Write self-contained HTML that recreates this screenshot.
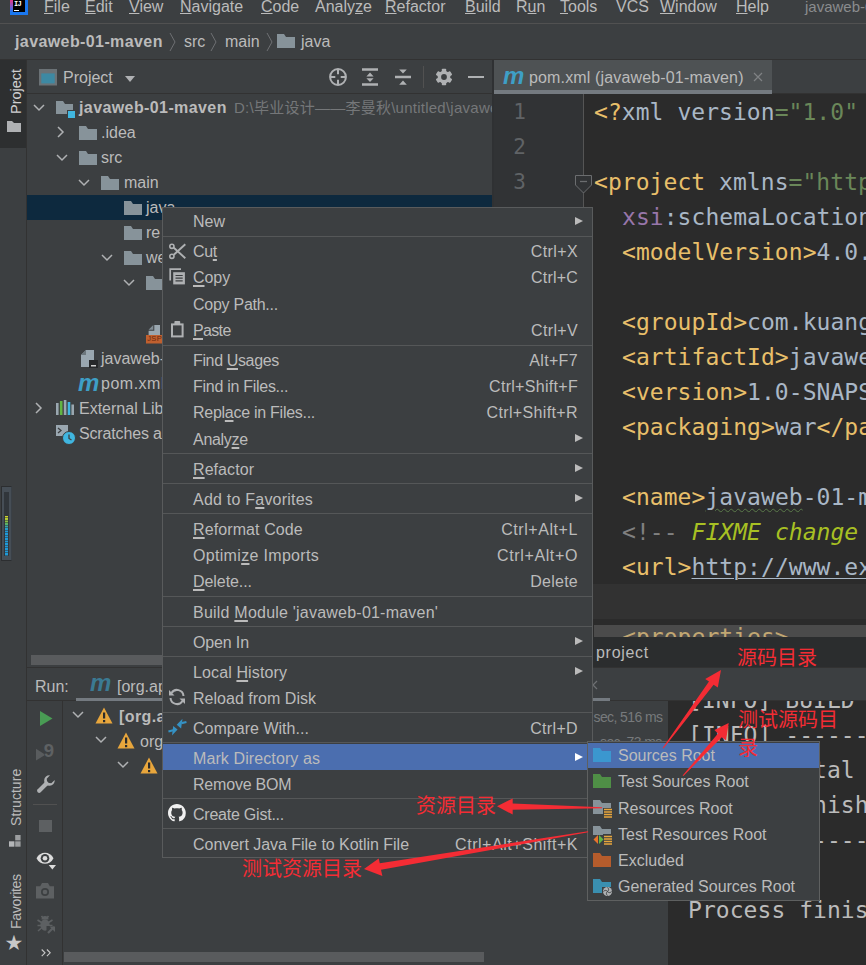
<!DOCTYPE html>
<html><head><meta charset="utf-8"><title>javaweb-01-maven</title>
<style>
*{box-sizing:border-box}
html,body{margin:0;padding:0}
body{width:866px;height:965px;overflow:hidden;position:relative;background:#3c3f41;color:#bbbbbb;font-family:"Liberation Sans","Noto Sans CJK SC",sans-serif;font-size:16px;}
.a{position:absolute}
.t{position:absolute;white-space:nowrap;line-height:20px;height:20px}
.b{font-weight:bold;letter-spacing:.4px}
u{text-decoration:underline;text-underline-offset:1.500px;text-decoration-thickness:1.500px}
.code{position:absolute;white-space:pre;font-family:"DejaVu Sans Mono","Liberation Mono",monospace;font-size:23px;line-height:35px;height:35px;color:#a9b7c6;letter-spacing:.05px}
.tag{color:#e8bf6a}.str{color:#6a8759}.ns{color:#9876aa}.at{color:#bababa}.cm{color:#808080}.fx{color:#a8c023;font-style:italic}
.ln{position:absolute;left:494px;width:32px;text-align:right;font-family:"DejaVu Sans Mono","Liberation Mono",monospace;font-size:21px;line-height:35px;color:#606366}
.mi{position:absolute;left:193px;white-space:nowrap;line-height:20px;height:20px;color:#bbbbbb}
.sc{position:absolute;right:288px;white-space:nowrap;line-height:20px;height:20px;color:#bbbbbb;letter-spacing:.5px;text-align:right}
.sep{position:absolute;left:163px;width:429px;height:1px;background:#555758}
.arr{position:absolute;left:575px;width:0;height:0;border-left:8px solid #bbbbbb;border-top:4.5px solid transparent;border-bottom:4.5px solid transparent}
.red{position:absolute;white-space:nowrap;color:#f42c34;font-family:"Noto Sans CJK SC","Liberation Sans",sans-serif;font-size:20px;line-height:26px}
svg{position:absolute;overflow:visible}
.mb u{text-underline-offset:.600px;text-decoration-thickness:1.200px}
</style></head><body>

<!-- ===== menu bar ===== -->
<div class="a" id="menubar" style="left:0;top:0;width:866px;height:24px;background:#3c3f41;border-bottom:1px solid #515151"></div>
<div class="a" style="left:10px;top:-3px;width:18px;height:18px;background:#1a78f0"></div>
<div class="a" style="left:10px;top:-3px;width:3px;height:15px;background:linear-gradient(180deg,#e23a86 0%,#d83a8e 25%,#8a55c8 60%,#1a78f0 100%)"></div>
<div class="a" style="left:12.800px;top:-3px;width:12.200px;height:14.800px;background:#000"></div>
<div class="a" style="left:14px;top:9.900px;width:5px;height:1.100px;background:#fff"></div>
<div class="t" style="left:14px;top:-0.500px;font-size:7px;font-weight:bold;color:#fff;line-height:9px;height:9px;font-family:'Liberation Mono',monospace;letter-spacing:-.6px">IJ</div>
<div class="t mb" style="left:44px;top:-3px"><u>F</u>ile</div>
<div class="t mb" style="left:85px;top:-3px"><u>E</u>dit</div>
<div class="t mb" style="left:129px;top:-3px"><u>V</u>iew</div>
<div class="t mb" style="left:180px;top:-3px"><u>N</u>avigate</div>
<div class="t mb" style="left:261px;top:-3px"><u>C</u>ode</div>
<div class="t mb" style="left:315px;top:-3px">Analy<u>z</u>e</div>
<div class="t mb" style="left:385px;top:-3px"><u>R</u>efactor</div>
<div class="t mb" style="left:465px;top:-3px"><u>B</u>uild</div>
<div class="t mb" style="left:516px;top:-3px">R<u>u</u>n</div>
<div class="t mb" style="left:560px;top:-3px"><u>T</u>ools</div>
<div class="t mb" style="left:616px;top:-3px">VCS</div>
<div class="t mb" style="left:660px;top:-3px"><u>W</u>indow</div>
<div class="t mb" style="left:736px;top:-3px"><u>H</u>elp</div>
<div class="t mb" style="left:805px;top:-3px;color:#8a8c8e;font-size:15px">javaweb-01-maven</div>

<!-- ===== navigation bar ===== -->
<div class="a" id="navbar" style="left:0;top:24px;width:866px;height:36px;background:#3c3f41;border-bottom:1px solid #323232"></div>
<div class="t b" style="left:15px;top:32px">javaweb-01-maven</div>
<div class="t" style="left:184px;top:32px">src</div>
<div class="t" style="left:225px;top:32px">main</div>
<div class="t" style="left:301px;top:32px">java</div>
<svg class="chev" style="left:169px;top:32px" width="8" height="20"><path d="M1 1 L6 10 L1 19" fill="none" stroke="#6e7073" stroke-width="1"/></svg>
<svg class="chev" style="left:210px;top:32px" width="8" height="20"><path d="M1 1 L6 10 L1 19" fill="none" stroke="#6e7073" stroke-width="1"/></svg>
<svg class="chev" style="left:266px;top:32px" width="8" height="20"><path d="M1 1 L6 10 L1 19" fill="none" stroke="#6e7073" stroke-width="1"/></svg>
<svg style="left:277px;top:34px" width="18" height="14"><path d="M0 0 H7 L9 3 H18 V14 H0 Z" fill="#87939a"/></svg>

<!-- ===== left tool stripe ===== -->
<div class="a" id="lstripe" style="left:0;top:60px;width:27px;height:905px;background:#3c3f41;border-right:1px solid #323232"></div>
<div class="a" style="left:0;top:60px;width:26px;height:88px;background:#2d2f30"></div>
<div class="t" style="left:6.500px;top:114px;transform-origin:0 0;transform:rotate(-90deg);font-size:14.500px;color:#d0d0d0;line-height:18px;height:18px">Project</div>
<svg style="left:7px;top:121px" width="14" height="11"><path d="M0 0 H5 L7 2 H14 V11 H0 Z" fill="#afb1b3"/></svg>


<!-- ===== project panel header ===== -->
<div class="a" id="projhead" style="left:27px;top:60px;width:465px;height:34px;background:#3c3f41;border-bottom:1px solid #323232"></div>
<svg style="left:39px;top:69px" width="18" height="17"><rect x="0" y="0" width="18" height="16.500" fill="#6b7276"/><rect x="2.300" y="4.400" width="13.400" height="10" fill="#3d89a3"/></svg>
<div class="t" style="left:63px;top:68px">Project</div>
<div class="a" style="left:125px;top:76px;width:0;height:0;border-top:6px solid #afb1b3;border-left:5px solid transparent;border-right:5px solid transparent"></div>
<!-- locate icon -->
<svg style="left:329px;top:68px" width="18" height="18" viewBox="0 0 18 18"><circle cx="9" cy="9" r="7.900" fill="none" stroke="#afb1b3" stroke-width="2"/><path d="M9 1V6.300M9 11.700V17M1 9H6.300M11.700 9H17" stroke="#afb1b3" stroke-width="2"/></svg>
<!-- expand all -->
<svg style="left:362px;top:68px" width="16" height="18" viewBox="0 0 16 18"><path d="M0 1.500H16M0 16.500H16" stroke="#afb1b3" stroke-width="2.500"/><path d="M8 4.600L11.600 8.500H4.400Z M8 14L11.600 10.200H4.400Z" fill="#afb1b3"/></svg>
<!-- collapse all -->
<svg style="left:395px;top:68px" width="16" height="18" viewBox="0 0 16 18"><path d="M0 9H16" stroke="#afb1b3" stroke-width="2.500"/><path d="M8 5.600L11.800 1.500H4.200Z M8 12.400L11.800 16.700H4.200Z" fill="#afb1b3"/></svg>
<div class="a" style="left:423px;top:66px;width:1px;height:22px;background:#515151"></div>
<!-- gear -->
<svg style="left:435px;top:68px" width="18" height="18" viewBox="0 0 18 18"><g fill="#afb1b3"><circle cx="9" cy="9" r="6.300"/><rect x="6.800" y="0.700" width="4.400" height="16.600" rx="0.800"/><rect x="6.800" y="0.700" width="4.400" height="16.600" rx="0.800" transform="rotate(60 9 9)"/><rect x="6.800" y="0.700" width="4.400" height="16.600" rx="0.800" transform="rotate(120 9 9)"/></g><circle cx="9" cy="9" r="2.900" fill="#3c3f41"/></svg>
<div class="a" style="left:468px;top:75.500px;width:16px;height:2.500px;background:#afb1b3"></div>

<!-- ===== project tree ===== -->
<div class="a" id="tree" style="left:27px;top:94px;width:465px;height:562px;background:#3c3f41"></div>
<div class="a" style="left:492px;top:60px;width:2px;height:607px;background:#2f3133"></div>
<div class="a" style="left:27px;top:195px;width:465px;height:25px;background:#0d293e"></div>

<svg class="cd" style="left:33px;top:103px" width="12" height="10"><path d="M1 2L6 7L11 2" fill="none" stroke="#afb1b3" stroke-width="1.5"/></svg>
<svg style="left:56px;top:101px" width="20" height="17"><path d="M0 0H7L9 3H17V13H0Z" fill="#87939a"/><rect x="11" y="9" width="9" height="8" fill="#3c3f41"/><rect x="12" y="10" width="7" height="7" fill="#40b6e0"/></svg>
<div class="t b" style="left:79px;top:98px">javaweb-01-maven</div>
<div class="t" style="left:234px;top:98px;color:#757779;font-size:15px;width:258px;overflow:hidden;letter-spacing:.25px">D:\毕业设计——李曼秋\untitled\javaweb</div>

<svg class="cr" style="left:56px;top:126px" width="10" height="12"><path d="M2 1L7 6L2 11" fill="none" stroke="#afb1b3" stroke-width="1.5"/></svg>
<svg class="fo" style="left:79px;top:126px" width="18" height="14"><path d="M0 0H7L9 3H18V14H0Z" fill="#87939a"/></svg>
<div class="t" style="left:101px;top:123px">.idea</div>

<svg class="cd" style="left:56px;top:153px" width="12" height="10"><path d="M1 2L6 7L11 2" fill="none" stroke="#afb1b3" stroke-width="1.5"/></svg>
<svg class="fo" style="left:79px;top:151px" width="18" height="14"><path d="M0 0H7L9 3H18V14H0Z" fill="#87939a"/></svg>
<div class="t" style="left:101px;top:148px">src</div>

<svg class="cd" style="left:78px;top:178px" width="12" height="10"><path d="M1 2L6 7L11 2" fill="none" stroke="#afb1b3" stroke-width="1.5"/></svg>
<svg class="fo" style="left:101px;top:176px" width="18" height="14"><path d="M0 0H7L9 3H18V14H0Z" fill="#87939a"/></svg>
<div class="t" style="left:124px;top:173px">main</div>

<svg class="fo" style="left:124px;top:201px" width="18" height="14"><path d="M0 0H7L9 3H18V14H0Z" fill="#87939a"/></svg>
<div class="t" style="left:146px;top:198px">java</div>

<svg class="fo" style="left:124px;top:226px" width="18" height="14"><path d="M0 0H7L9 3H18V14H0Z" fill="#87939a"/></svg>
<div class="t" style="left:146px;top:223px">re</div>

<svg class="cd" style="left:101px;top:253px" width="12" height="10"><path d="M1 2L6 7L11 2" fill="none" stroke="#afb1b3" stroke-width="1.5"/></svg>
<svg class="fo" style="left:124px;top:251px" width="18" height="14"><path d="M0 0H7L9 3H18V14H0Z" fill="#87939a"/></svg>
<div class="t" style="left:146px;top:248px">we</div>

<svg class="cd" style="left:123px;top:278px" width="12" height="10"><path d="M1 2L6 7L11 2" fill="none" stroke="#afb1b3" stroke-width="1.5"/></svg>
<svg class="fo" style="left:146px;top:276px" width="18" height="14"><path d="M0 0H7L9 3H18V14H0Z" fill="#87939a"/></svg>

<!-- jsp file icon -->
<svg style="left:146px;top:324.500px" width="18" height="19"><path d="M8.300 0H14V10H2.600V5.700H8.300Z" fill="#9aa7b0"/><path d="M2.600 4.700L7.300 0V4.700Z" fill="#7f8b93"/><rect x="0" y="10" width="18" height="8.500" fill="#c0602f"/></svg>
<div class="t" style="left:147.300px;top:334px;font-size:7.500px;color:#6b2a10;line-height:10px;height:10px;letter-spacing:.3px">JSP</div>

<!-- iml file -->
<svg style="left:81px;top:350px" width="18" height="18"><path d="M5 0H13V17H0V5Z" fill="#9aa7b0"/><path d="M0 5H5V0Z" fill="#6d777d"/><rect x="8" y="10" width="9" height="8" fill="#26282a"/><rect x="10" y="15" width="5" height="1.5" fill="#d0d0d0"/></svg>
<div class="t" style="left:101px;top:348.500px">javaweb-01-maven.iml</div>
<div class="t" style="left:78px;top:371.500px;font-size:24px;font-weight:bold;font-style:italic;color:#3e9fc6;line-height:22px;height:22px;letter-spacing:-.5px">m</div>
<div class="t" style="left:101px;top:373.500px;letter-spacing:.5px">pom.xml</div>

<svg class="cr" style="left:34px;top:402px" width="10" height="12"><path d="M2 1L7 6L2 11" fill="none" stroke="#afb1b3" stroke-width="1.5"/></svg>
<svg style="left:56px;top:399px" width="18" height="16"><rect x="0" y="4" width="2.600" height="12" fill="#9aa7b0"/><rect x="3.900" y="2" width="2.600" height="14" fill="#62b543"/><rect x="7.800" y="1" width="2.600" height="15" fill="#9aa7b0"/><rect x="11.700" y="3" width="2.600" height="13" fill="#40b6e0"/><rect x="15.400" y="5.500" width="2.600" height="10.500" fill="#9aa7b0"/></svg>
<div class="t" style="left:79px;top:398.500px">External Libraries</div>

<svg style="left:56px;top:425px" width="20" height="20"><path d="M0 0H12V8H8V11H0Z" fill="#9aa7b0"/><path d="M2 3L5 5.5L2 8" fill="none" stroke="#3c3f41" stroke-width="1.3"/><circle cx="13" cy="13" r="6.5" fill="#40b6e0" stroke="#3c3f41" stroke-width="1"/><path d="M13 9.5V13.5L15.5 15" fill="none" stroke="#3c3f41" stroke-width="1.3"/></svg>
<div class="t" style="left:79px;top:423.600px;letter-spacing:-.15px">Scratches and Consoles</div>

<!-- tree h scrollbar -->
<div class="a" style="left:31px;top:655px;width:300px;height:10px;background:#595b5d"></div>


<!-- ===== editor ===== -->
<div class="a" id="tabbar" style="left:494px;top:60px;width:372px;height:34px;background:#3c3f41;border-bottom:1px solid #323232"></div>
<div class="a" id="tab" style="left:494px;top:60px;width:278px;height:34px;background:#4e5254;border-bottom:4px solid #747a80"></div>
<div class="t" style="left:503px;top:65px;font-size:24px;font-weight:bold;font-style:italic;color:#3e9fc6;line-height:22px;height:22px;letter-spacing:-.5px">m</div>
<div class="t" style="left:529px;top:68px;letter-spacing:.15px">pom.xml (javaweb-01-maven)</div>
<svg style="left:753px;top:72px" width="10" height="10"><path d="M1 1L9 9M9 1L1 9" stroke="#7f8284" stroke-width="1.2"/></svg>

<div class="a" id="gutter" style="left:494px;top:94px;width:90px;height:543px;background:#313335;border-right:1px solid #555555"></div>
<div class="a" id="edbg" style="left:584px;top:94px;width:282px;height:543px;background:#2b2b2b"></div>
<div class="a" id="caretrow" style="left:584px;top:584px;width:282px;height:35px;background:#323232"></div>

<div class="ln" style="top:95px">1</div>
<div class="ln" style="top:130px">2</div>
<div class="ln" style="top:165px">3</div>
<svg style="left:575px;top:175px" width="17" height="19"><path d="M0.5 0.5H16.5V10L8.5 18L0.5 10Z" fill="#313335" stroke="#6b6d6f"/><path d="M5 6.5H12" stroke="#6b6d6f" stroke-width="1.3"/></svg>

<div class="a" id="edclip" style="left:583px;top:94.500px;width:283px;height:542.500px;overflow:hidden">
<div class="code" style="left:11px;top:0px"><span class="tag">&lt;?</span>xml version<span class="str">="1.0" encoding="UTF-8"</span><span class="tag">?&gt;</span></div>
<div class="code" style="left:11px;top:70px"><span class="tag">&lt;project </span>xmlns<span class="str">="http://maven.apache.org/POM/4.0.0"</span></div>
<div class="code" style="left:39px;top:105px"><span class="ns">xsi</span>:schemaLocation<span class="str">="http://maven.apache.org"</span></div>
<div class="code" style="left:39px;top:140px"><span class="tag">&lt;modelVersion&gt;</span>4.0.0<span class="tag">&lt;/modelVersion&gt;</span></div>
<div class="code" style="left:39px;top:210px"><span class="tag">&lt;groupId&gt;</span>com.kuang<span class="tag">&lt;/groupId&gt;</span></div>
<div class="code" style="left:39px;top:245px"><span class="tag">&lt;artifactId&gt;</span>javaweb-01-maven<span class="tag">&lt;/artifactId&gt;</span></div>
<div class="code" style="left:39px;top:280px"><span class="tag">&lt;version&gt;</span>1.0-SNAPSHOT<span class="tag">&lt;/version&gt;</span></div>
<div class="code" style="left:39px;top:315px"><span class="tag">&lt;packaging&gt;</span>war<span class="tag">&lt;/packaging&gt;</span></div>
<div class="code" style="left:39px;top:385px"><span class="tag">&lt;name&gt;</span><span style="text-decoration:underline wavy #5a7a4a 1px;text-underline-offset:3px">javaweb</span>-01-maven Maven Webapp<span class="tag">&lt;/name&gt;</span></div>
<div class="code" style="left:39px;top:420px"><span class="cm">&lt;!-- </span><span class="fx">FIXME change it to the project's website</span><span class="cm"> --&gt;</span></div>
<div class="code" style="left:39px;top:455px"><span class="tag">&lt;url&gt;</span><span style="text-decoration:underline;text-decoration-thickness:1px;text-underline-offset:3px">http://www.example.com</span><span class="tag">&lt;/url&gt;</span></div>
<div class="code" style="left:39px;top:525px"><span class="tag">&lt;properties&gt;</span></div>
</div>
<!-- h scrollbar over editor -->
<div class="a" style="left:594px;top:625px;width:272px;height:12px;background:rgba(128,128,128,.38)"></div>

<!-- breadcrumbs -->
<div class="a" id="crumbs" style="left:494px;top:637px;width:372px;height:30px;background:#2b2d2e"></div>
<div class="t" style="left:596px;top:643px;color:#bbbbbb;letter-spacing:.7px">project</div>

<!-- ===== run panel ===== -->
<div class="a" id="runsep" style="left:27px;top:667px;width:839px;height:1px;background:#323232"></div>
<div class="a" id="runhead" style="left:27px;top:668px;width:839px;height:33px;background:#3c3f41;border-bottom:1px solid #323232"></div>
<div class="t" style="left:35px;top:676.500px">Run:</div>
<div class="t" style="left:90px;top:671.700px;font-size:24px;font-weight:bold;font-style:italic;color:#3b7a93;line-height:22px;height:22px;letter-spacing:-.5px">m</div>
<div class="t" style="left:117px;top:676.500px">[org.apache.maven.plugins:maven-archetype</div>
<div class="a" style="left:76px;top:697.500px;width:534px;height:3.500px;background:#747a80"></div>
<svg style="left:588px;top:680px" width="10" height="10"><path d="M1 1L9 9M9 1L1 9" stroke="#6e7073" stroke-width="1.2"/></svg>

<div class="a" id="runtb" style="left:27px;top:701px;width:36px;height:264px;background:#3c3f41;border-right:1px solid #323232"></div>
<!-- run -->
<svg style="left:40px;top:711px" width="13" height="15"><path d="M0 0L12.5 7.5L0 15Z" fill="#499c54"/></svg>
<!-- rerun failed (disabled) -->
<svg style="left:36px;top:742px" width="20" height="20"><path d="M0 6.800L9.400 12.700L0 18.600Z" fill="#595c5e"/><text x="12.800" y="14.700" text-anchor="middle" style="font-family:'Liberation Sans',sans-serif;font-size:18.500px;font-weight:700" fill="#3c3f41" stroke="#3c3f41" stroke-width="1">9</text><text x="12.800" y="14.700" text-anchor="middle" style="font-family:'Liberation Sans',sans-serif;font-size:18.500px;font-weight:700" fill="#5e6163">9</text></svg>
<!-- wrench -->
<svg style="left:36.500px;top:775px" width="18" height="18" viewBox="0 0 18 18"><path d="M2.200 15.800L9.500 8.500" stroke="#afb1b3" stroke-width="4.200" stroke-linecap="round"/><path d="M13 0.300A5.300 5.300 0 1 0 17.700 5L14.300 8.300L10.300 7.700L9.700 3.700Z" fill="#afb1b3"/></svg>
<div class="a" style="left:33px;top:804px;width:24px;height:1px;background:#515151"></div>
<!-- stop -->
<div class="a" style="left:38.500px;top:819.500px;width:13px;height:12.600px;background:#5d6062"></div>
<!-- eye -->
<svg style="left:36px;top:849.500px" width="22" height="20" viewBox="0 0 22 20"><path d="M0.500 8.200C4 0.800 14 0.800 17.500 8.200C14 15.600 4 15.600 0.500 8.200Z" fill="#dcdcdc"/><circle cx="9" cy="8.200" r="4.300" fill="#3c3f41"/><circle cx="9" cy="8.200" r="2.300" fill="#dcdcdc"/><path d="M12.700 15H20L16.350 19.400Z" fill="#dcdcdc"/></svg>
<!-- camera -->
<svg style="left:36px;top:883px" width="18" height="16" viewBox="0 0 18 16"><path d="M0 3.200H4.200L6 0H12L13.800 3.200H18V15.600H0Z" fill="#5d6062"/><circle cx="9" cy="9" r="4" fill="#3c3f41"/><circle cx="9" cy="9" r="2.300" fill="#5d6062"/></svg>
<!-- bug -->
<svg style="left:36.500px;top:914.500px" width="19" height="19" viewBox="0 0 19 19"><ellipse cx="8" cy="10" rx="4.700" ry="5.800" fill="#5d6062"/><path d="M4.500 4.500A3.500 3.500 0 0 1 11.500 4.500Z" fill="#5d6062"/><path d="M0.500 5L4.500 7.500M0.500 10.500H4M1 16L4.500 13M15.500 5L11.500 7.500M15.500 10.500H12M4.500 1L6 3M11.500 1L10 3" stroke="#5d6062" stroke-width="1.600"/><path d="M9.500 11H19V19H9.500Z" fill="#3c3f41"/><path d="M11 18L17 12" stroke="#5d6062" stroke-width="2.200"/><path d="M12.500 11.500H18V17Z" fill="#5d6062"/></svg>
<svg style="left:41px;top:948.500px" width="11" height="8" viewBox="0 0 11 8"><path d="M0.700 0.500L4 3.800L0.700 7.100M5.900 0.500L9.200 3.800L5.900 7.100" fill="none" stroke="#c8c8c8" stroke-width="1.100"/></svg>

<!-- run tree -->
<div class="a" id="runtree" style="left:64px;top:701px;width:604px;height:252px;background:#3c3f41"></div>
<svg class="cd" style="left:72px;top:710px" width="12" height="10"><path d="M1 2L6 7L11 2" fill="none" stroke="#afb1b3" stroke-width="1.5"/></svg>
<svg class="wn" style="left:95px;top:707px" width="18" height="17"><path d="M9 0.500L17.500 16.500H0.500Z" fill="#e8a63c"/><rect x="8" y="5.500" width="2.200" height="6" fill="#2b2b2b"/><rect x="8" y="13" width="2.200" height="2.200" fill="#2b2b2b"/></svg>
<div class="t b" style="left:119px;top:706.700px">[org.apache.maven.plugins:maven-archetype-plugin</div>
<svg class="cd" style="left:95px;top:735px" width="12" height="10"><path d="M1 2L6 7L11 2" fill="none" stroke="#afb1b3" stroke-width="1.5"/></svg>
<svg class="wn" style="left:117px;top:732px" width="18" height="17"><path d="M9 0.500L17.500 16.500H0.500Z" fill="#e8a63c"/><rect x="8" y="5.500" width="2.200" height="6" fill="#2b2b2b"/><rect x="8" y="13" width="2.200" height="2.200" fill="#2b2b2b"/></svg>
<div class="t" style="left:140px;top:731.700px">org.apache.maven:standalone-pom:pom:1</div>
<svg class="cd" style="left:117px;top:760px" width="12" height="10"><path d="M1 2L6 7L11 2" fill="none" stroke="#afb1b3" stroke-width="1.5"/></svg>
<svg class="wn" style="left:140px;top:757px" width="18" height="17"><path d="M9 0.500L17.500 16.500H0.500Z" fill="#e8a63c"/><rect x="8" y="5.500" width="2.200" height="6" fill="#2b2b2b"/><rect x="8" y="13" width="2.200" height="2.200" fill="#2b2b2b"/></svg>
<div class="t" style="left:163px;top:756px">generate</div>
<div class="t" style="left:593.500px;top:707px;color:#777a7c;font-size:14px;letter-spacing:-.6px">sec, 516 ms</div>
<div class="t" style="left:600px;top:732px;color:#777a7c;font-size:14px;letter-spacing:-.6px">sec, 73 ms</div>
<!-- run tree scrollbar -->
<div class="a" style="left:64px;top:953px;width:604px;height:12px;background:#3c3f41"></div>
<div class="a" style="left:64px;top:952px;width:420px;height:10px;background:#595b5d"></div>

<!-- console -->
<div class="a" id="console" style="left:668px;top:701px;width:198px;height:264px;background:#2b2b2b;overflow:hidden">
<div class="code" style="left:20px;top:-18.500px;color:#bbbbbb">[INFO] BUILD SUCCESS</div>
<div class="code" style="left:20px;top:16.500px;color:#bbbbbb">[INFO] ------------------</div>
<div class="code" style="left:20px;top:52px;color:#bbbbbb">[INFO] Total time:  10.5</div>
<div class="code" style="left:20px;top:86.500px;color:#bbbbbb">[INFO] Finished at: 2021</div>
<div class="code" style="left:20px;top:121.500px;color:#bbbbbb">[INFO] ------------------</div>
<div class="code" style="left:20px;top:192px;color:#bbbbbb">Process finished with exit code 0</div>
</div>

<!-- left stripe bottom -->
<div class="t" style="left:6.500px;top:826px;transform-origin:0 0;transform:rotate(-90deg);font-size:14px;letter-spacing:.05px;color:#bbbbbb;line-height:18px;height:18px">Structure</div>
<svg style="left:9px;top:834.500px" width="12" height="12"><rect x="6.200" y="0" width="5.400" height="5.400" fill="#9c9ea0"/><rect x="0" y="6.300" width="5.400" height="5.400" fill="#b4b6b8"/><rect x="6.200" y="6.300" width="5.400" height="5.400" fill="#9c9ea0"/></svg>
<div class="t" style="left:6.500px;top:928.500px;transform-origin:0 0;transform:rotate(-90deg);font-size:14.300px;letter-spacing:-.45px;color:#bbbbbb;line-height:18px;height:18px">Favorites</div>
<div class="t" style="left:4.500px;top:932.500px;font-size:21px;color:#c8c8c8;font-family:'DejaVu Sans',sans-serif">★</div>
<!-- level meter widget at left -->
<div class="a" style="left:1px;top:486px;width:11px;height:75px;background:#464e56;border:1px solid #2c2e30;border-right-color:#3a4046;border-radius:1px"></div>
<div class="a" style="left:4px;top:492px;width:4.500px;height:64px;background:#31363b"></div>
<div class="a" style="left:4.500px;top:515.500px;width:3.500px;height:40px;background:linear-gradient(180deg,#d6d62a 0,#a8c838 4px,#6ab850 7px,#3aa8a0 10px,#1f9ad8 14px,#1f9ad8 100%)"></div>
<div class="a" style="left:4px;top:515.500px;width:4.500px;height:40px;background:repeating-linear-gradient(180deg,rgba(49,54,59,0) 0,rgba(49,54,59,0) 1.300px,rgba(49,54,59,.55) 1.300px,rgba(49,54,59,.55) 2.500px)"></div>

<!-- ===== context menu ===== -->
<div class="a" id="ctx" style="left:162px;top:207px;width:431px;height:651px;background:#3c3f41;border:1px solid #595b5c"></div>
<div class="mi" style="top:211.8px;letter-spacing:-0.01px">New</div>
<div class="arr" style="top:216.8px;border-left-color:#bbbbbb"></div>
<div class="sep" style="top:235.8px"></div>
<div class="mi" style="top:241.9px;letter-spacing:-0.34px">Cu<u>t</u></div>
<div class="sc" style="top:241.9px;letter-spacing:0.38px">Ctrl+X</div>
<div class="mi" style="top:268.2px;letter-spacing:-0.06px"><u>C</u>opy</div>
<div class="sc" style="top:268.2px;letter-spacing:0.20px">Ctrl+C</div>
<div class="mi" style="top:294.5px;letter-spacing:-0.26px">Copy Path...</div>
<div class="mi" style="top:320.8px;letter-spacing:-0.66px"><u>P</u>aste</div>
<div class="sc" style="top:320.8px;letter-spacing:0.35px">Ctrl+V</div>
<div class="sep" style="top:344.6px"></div>
<div class="mi" style="top:350.8px;letter-spacing:-0.36px">Find <u>U</u>sages</div>
<div class="sc" style="top:350.8px;letter-spacing:0.35px">Alt+F7</div>
<div class="mi" style="top:377.1px;letter-spacing:-0.28px">Find in Files...</div>
<div class="sc" style="top:377.1px;letter-spacing:0.30px">Ctrl+Shift+F</div>
<div class="mi" style="top:403.4px;letter-spacing:-0.27px">Repl<u>a</u>ce in Files...</div>
<div class="sc" style="top:403.4px;letter-spacing:0.36px">Ctrl+Shift+R</div>
<div class="mi" style="top:429.7px;letter-spacing:-0.29px">Analy<u>z</u>e</div>
<div class="arr" style="top:434.3px;border-left-color:#bbbbbb"></div>
<div class="sep" style="top:453.3px"></div>
<div class="mi" style="top:459.7px;letter-spacing:0.07px"><u>R</u>efactor</div>
<div class="arr" style="top:464.3px;border-left-color:#bbbbbb"></div>
<div class="sep" style="top:483.3px"></div>
<div class="mi" style="top:489.8px;letter-spacing:0.22px">Add to F<u>a</u>vorites</div>
<div class="arr" style="top:494.3px;border-left-color:#bbbbbb"></div>
<div class="sep" style="top:513.3px"></div>
<div class="mi" style="top:519.8px;letter-spacing:0.10px"><u>R</u>eformat Code</div>
<div class="sc" style="top:519.8px;letter-spacing:0.57px">Ctrl+Alt+L</div>
<div class="mi" style="top:546.1px;letter-spacing:0.32px">Optimi<u>z</u>e Imports</div>
<div class="sc" style="top:546.1px;letter-spacing:0.63px">Ctrl+Alt+O</div>
<div class="mi" style="top:572.4px;letter-spacing:-0.07px"><u>D</u>elete...</div>
<div class="sc" style="top:572.4px;letter-spacing:0.26px">Delete</div>
<div class="sep" style="top:595.8px"></div>
<div class="mi" style="top:602.5px;letter-spacing:0.22px">Build <u>M</u>odule 'javaweb-01-maven'</div>
<div class="sep" style="top:625.8px"></div>
<div class="mi" style="top:632.5px;letter-spacing:-0.15px">Open In</div>
<div class="arr" style="top:636.8px;border-left-color:#bbbbbb"></div>
<div class="sep" style="top:655.8px"></div>
<div class="mi" style="top:662.6px;letter-spacing:0.12px">Local <u>H</u>istory</div>
<div class="arr" style="top:666.8px;border-left-color:#bbbbbb"></div>
<div class="mi" style="top:688.8px;letter-spacing:0.02px">Reload from Disk</div>
<div class="sep" style="top:712.1px"></div>
<div class="mi" style="top:718.9px;letter-spacing:0.02px">Compare With...</div>
<div class="sc" style="top:718.9px;letter-spacing:0.34px">Ctrl+D</div>
<div class="sep" style="top:742.1px"></div>
<div class="a" style="left:163px;top:744.2px;width:429px;height:25.5px;background:#4b6eaf"></div>
<div class="mi" style="top:748.9px;letter-spacing:0.10px">Mark Directory as</div>
<div class="arr" style="top:753.1px;border-left-color:#ffffff"></div>
<div class="mi" style="top:775.2px;letter-spacing:-0.20px">Remove BOM</div>
<div class="sep" style="top:798.3px"></div>
<div class="mi" style="top:805.3px;letter-spacing:-0.23px">Create Gist...</div>
<div class="sep" style="top:828.3px"></div>
<div class="mi" style="top:835.3px;letter-spacing:-0.03px">Convert Java File to Kotlin File</div>
<div class="sc" style="top:835.3px;letter-spacing:0.54px">Ctrl+Alt+Shift+K</div>

<!-- menu icons -->
<!-- cut -->
<svg style="left:169px;top:243px" width="17" height="17" viewBox="0 0 17 17"><circle cx="2.900" cy="3.300" r="2.100" fill="none" stroke="#afb1b3" stroke-width="1.600"/><circle cx="2.900" cy="13.300" r="2.100" fill="none" stroke="#afb1b3" stroke-width="1.600"/><path d="M4.800 4.800L16.300 15.200M4.800 11.800L16.300 1.200" stroke="#afb1b3" stroke-width="1.900"/></svg>
<!-- copy -->
<svg style="left:169px;top:268px" width="17" height="17" viewBox="0 0 17 17"><path d="M1.200 12.500V1.200H12" fill="none" stroke="#afb1b3" stroke-width="1.700"/><rect x="4.200" y="4.200" width="11.700" height="12.200" fill="#afb1b3"/><path d="M6.500 7.500H13.700M6.500 10.200H13.700M6.500 12.900H13.700" stroke="#3c3f41" stroke-width="1.200"/></svg>
<!-- paste -->
<svg style="left:170.800px;top:321.200px" width="13" height="17" viewBox="0 0 13 17"><rect x="1" y="3.400" width="10.600" height="12" fill="none" stroke="#afb1b3" stroke-width="2"/><rect x="3.400" y="0" width="5.800" height="3.600" rx="0.800" fill="#afb1b3"/></svg>
<!-- reload -->
<svg style="left:168px;top:688px" width="18" height="18" viewBox="0 0 18 18"><path d="M15.500 8A6.500 6.500 0 0 0 3.500 5" fill="none" stroke="#afb1b3" stroke-width="2"/><path d="M1 2V7.500H6.500Z" fill="#afb1b3"/><path d="M2.500 10A6.500 6.500 0 0 0 14.500 13" fill="none" stroke="#afb1b3" stroke-width="2"/><path d="M17 16V10.500H11.500Z" fill="#afb1b3"/></svg>
<!-- compare -->
<svg style="left:168px;top:718px" width="19" height="18" viewBox="0 0 19 18"><g fill="#3592c4"><path d="M8.700 6.800L14.500 0.700L13.100 10.400Z"/><path d="M13.600 4.100L18.200 2.900L18.700 4.900L13.800 6.200Z"/><path d="M9.600 11.600L5.200 8.100L4 17.600Z"/><path d="M0.200 12.400L4.800 11.300L5.300 13.300L0.700 14.500Z"/></g></svg>
<!-- github -->
<svg style="left:168.400px;top:803.600px" width="17.800" height="17.800" viewBox="0 0 16 16"><path fill="#f0f0f0" d="M8 0C3.580 0 0 3.580 0 8c0 3.540 2.290 6.530 5.470 7.590.4.070.55-.17.55-.38 0-.19-.01-.82-.01-1.490-2.010.37-2.530-.49-2.690-.94-.09-.23-.48-.94-.82-1.130-.28-.15-.68-.52-.01-.53.630-.01 1.080.58 1.230.82.720 1.210 1.870.87 2.330.66.070-.52.280-.87.510-1.070-1.780-.2-3.640-.89-3.640-3.950 0-.87.310-1.590.82-2.150-.08-.2-.36-1.020.08-2.120 0 0 .67-.21 2.200.82.640-.18 1.320-.27 2-.27s1.360.09 2 .27c1.530-1.040 2.200-.82 2.200-.82.440 1.100.16 1.920.08 2.120.51.560.82 1.270.82 2.150 0 3.070-1.870 3.750-3.650 3.950.29.250.54.730.54 1.480 0 1.070-.01 1.930-.01 2.200 0 .21.150.46.550.38A8.013 8.013 0 0 0 16 8c0-4.420-3.580-8-8-8z"/></svg>

<!-- ===== submenu ===== -->
<div class="a" id="sub" style="left:587px;top:741px;width:233px;height:159.500px;background:#3c3f41;border:1px solid #5e6060"></div>
<div class="a" style="left:588px;top:743px;width:231px;height:25px;background:#4b6eaf"></div>
<svg style="left:593px;top:748px" width="18" height="14"><path d="M0 0H7L9 3H18V14H0Z" fill="#3b97cf"/></svg>
<div class="t" style="left:618px;top:746.4px">Sources Root</div>
<svg style="left:593px;top:774px" width="18" height="14"><path d="M0 0H7L9 3H18V14H0Z" fill="#4f8f46"/></svg>
<div class="t" style="left:618px;top:772.4px">Test Sources Root</div>
<svg style="left:593px;top:800px" width="20" height="17"><path d="M0 0H7L9 3H18V8H10V14H0Z" fill="#87939a"/><path d="M11 9.500H19M11 12H19M11 14.500H19M11 17H19" stroke="#e8a63c" stroke-width="1.400"/></svg>
<div class="t" style="left:618px;top:799.4px">Resources Root</div>
<svg style="left:593px;top:826px" width="20" height="18"><path d="M0 0H7L9 3H18V8H10V9H0Z" fill="#87939a"/><path d="M5 9L0.500 13.500L5 18Z" fill="#e8742c"/><path d="M6 9L10.500 13.500L6 18Z" fill="#62b543"/><path d="M11 10.500H19M11 13H19M11 15.500H19M11 18H19" stroke="#e8a63c" stroke-width="1.400"/></svg>
<div class="t" style="left:618px;top:825.4px">Test Resources Root</div>
<svg style="left:593px;top:853px" width="18" height="14"><path d="M0 0H7L9 3H18V14H0Z" fill="#b55c2c"/></svg>
<div class="t" style="left:618px;top:851.4px">Excluded</div>
<svg style="left:593px;top:879px" width="20" height="17"><path d="M0 0H7L9 3H18V8H9V14H0Z" fill="#3a8fb0"/><circle cx="14.500" cy="12.500" r="4.500" fill="#afb1b3"/><path d="M14.500 8.500C16 10 16 11 14.500 12.500C13 14 13 15 14.500 16.500M10.500 12.500C12 11 13 11 14.500 12.500C16 14 17 14 18.500 12.500" fill="none" stroke="#3c3f41" stroke-width="1"/></svg>
<div class="t" style="left:618px;top:877.4px">Generated Sources Root</div>

<!-- ===== red annotations ===== -->
<div class="red" style="left:737px;top:644px">源码目录</div>
<div class="red" style="left:738px;top:705px;line-height:27.500px;width:102px;white-space:normal;word-break:break-all">测试源码目录</div>
<div class="red" style="left:416px;top:792px">资源目录</div>
<div class="red" style="left:242px;top:855px">测试资源目录</div>
<svg id="arrows" style="left:0;top:0" width="866" height="965" viewBox="0 0 866 965">
<g fill="#f42c34">
<path d="M721 670 L717.800 687.500 L713.600 684.700 L663.400 748.600 L662.600 748 L709 681.600 L705.200 679 Z"/>
<path d="M728.700 723 L726 740.500 L721.800 737.200 L683.400 776 L682.600 775.400 L718 733.600 L714.400 730 Z"/>
<path d="M497 806.300 L512.700 798.500 L512.700 803.500 L602 807.200 L602 808.200 L512.700 809.800 L512.700 814.600 Z"/>
<path d="M364 869 L378.700 858.500 L379.800 863.300 L588 831.200 L588.200 832.200 L381 869.800 L382.400 876 Z"/>
</g>
</svg>

</body></html>
